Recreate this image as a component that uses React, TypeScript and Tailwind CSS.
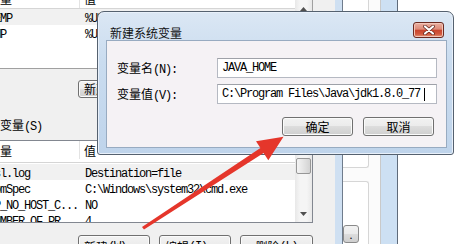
import React from "react";

const CJK_SPLIT = /([\u3400-\u9fff\u3000-\u303f\uff00-\uffef]+)/;
const CJK_TEST = /[\u3400-\u9fff\u3000-\u303f\uff00-\uffef]/;

function Mix({ s }: { s: string }) {
  const parts = s.split(CJK_SPLIT).filter((p) => p.length > 0);
  return (
    <>
      {parts.map((p, i) =>
        CJK_TEST.test(p) ? (
          <span key={i} className="font-['Noto_Sans_CJK_SC',sans-serif] text-[12px]">
            {p}
          </span>
        ) : (
          <span key={i} className="font-['Liberation_Mono',monospace] text-[12px] tracking-[-1.2px]">
            {p}
          </span>
        )
      )}
    </>
  );
}

function WinButton({ label, className }: { label: string; className: string }) {
  return (
    <div
      className={`flex items-center justify-center rounded-[3px] border border-[#707070] bg-[linear-gradient(#f2f2f2,#ebebeb_50%,#dddddd_50%,#cfcfcf)] shadow-[inset_0_0_0_1px_#fbfbfb] whitespace-pre leading-[14px] text-black ${className}`}
    >
      <Mix s={label} />
    </div>
  );
}

function Row({ name, value, shade }: { name: string; value: string; shade?: boolean }) {
  return (
    <div className={`flex h-[16px] items-center whitespace-pre leading-[16px] text-black ${shade ? "bg-[#f1f1f1]" : "bg-white"}`}>
      <div className="w-[80px] shrink-0">
        <span className="-ml-[12px] inline-block">
          <Mix s={name} />
        </span>
      </div>
      <div className="pl-[5px]">
        <Mix s={value} />
      </div>
    </div>
  );
}

function Header() {
  return (
    <div className="flex h-[20px] items-center border-b border-[#d5d5d5] bg-white leading-[16px] text-black">
      <div className="flex h-full w-[80px] shrink-0 items-center border-r border-[#e3e3e3]">
        <span className="-ml-[12px]">
          <Mix s="变量" />
        </span>
      </div>
      <div className="pl-[4px]">
        <Mix s="值" />
      </div>
    </div>
  );
}

function ScrollBar() {
  return (
    <div className="flex h-full w-[17px] shrink-0 flex-col bg-[linear-gradient(90deg,#e8e8e8,#f5f5f5_30%,#f5f5f5_70%,#e8e8e8)]">
      <div className="flex h-[17px] items-center justify-center">
        <svg width="7" height="4" viewBox="0 0 7 4">
          <path d="M0 4 L3.5 0 L7 4 Z" fill="#505050" />
        </svg>
      </div>
      <div className="mx-[1px] h-[16px] rounded-[2px] border border-[#979797] bg-[linear-gradient(90deg,#f4f4f4,#e4e4e4_50%,#d3d3d3)]" />
      <div className="flex-1" />
      <div className="flex h-[17px] items-center justify-center">
        <svg width="7" height="4" viewBox="0 0 7 4">
          <path d="M0 0 L3.5 4 L7 0 Z" fill="#505050" />
        </svg>
      </div>
    </div>
  );
}

function LeftPane() {
  return (
    <div className="flex h-full w-[313px] shrink-0 flex-col bg-[#f0f0f0]">
      {/* upper list (user variables) */}
      <div className="flex h-[69px] shrink-0 border-b border-r border-[#a0a0a0] bg-white">
        <div className="flex flex-1 flex-col overflow-hidden">
          <div className="-mt-[11px]">
            <Header />
          </div>
          <Row name="TEMP" value="%USERPROFILE%\AppData\Local\Temp" shade />
          <Row name="TMP" value="%USERPROFILE%\AppData\Local\Temp" />
        </div>
        <ScrollBar />
      </div>

      {/* middle gray area */}
      <div className="flex h-[71px] shrink-0 flex-col pt-[11px]">
        <WinButton label="新建(N)..." className="ml-[78px] h-[18px] w-[72px]" />
        <div className="mt-[20px] h-[12px] whitespace-pre leading-[12px] text-black">
          <span className="-ml-[24px] inline-block">
            <Mix s="系统变量(S)" />
          </span>
        </div>
      </div>

      {/* lower list (system variables) */}
      <div className="flex h-[83px] shrink-0 border-y border-r border-[#828790] bg-white">
        <div className="flex flex-1 flex-col overflow-hidden">
          <div className="h-[23px] shrink-0">
            <div className="flex h-[22px] items-center border-b border-[#d5d5d5] bg-white pb-[3px] leading-[16px] text-black">
              <div className="flex h-full w-[80px] shrink-0 items-center border-r border-[#e3e3e3]">
                <span className="-ml-[12px]">
                  <Mix s="变量" />
                </span>
              </div>
              <div className="pl-[4px]">
                <Mix s="值" />
              </div>
            </div>
          </div>
          <Row name="asl.log" value="Destination=file" shade />
          <Row name="ComSpec" value="C:\Windows\system32\cmd.exe" />
          <Row name="FP_NO_HOST_C..." value="NO" />
          <Row name="NUMBER_OF_PR..." value="4" />
        </div>
        <ScrollBar />
      </div>

      {/* bottom buttons */}
      <div className="flex shrink-0 gap-[9px] pl-[78px] pt-[12px]">
        <WinButton label="新建(W)..." className="h-[23px] w-[72px]" />
        <WinButton label="编辑(I)..." className="h-[23px] w-[72px]" />
        <WinButton label="删除(L)" className="h-[23px] w-[73px]" />
      </div>
    </div>
  );
}

function CloseButton() {
  return (
    <div className="mr-[3px] mt-[10px] flex h-[16px] w-[31px] items-center justify-center rounded-[3px] border border-[#6b2a21] bg-[linear-gradient(#eab0a2,#dd8a78_45%,#c8432c_50%,#d25a3f_80%,#e59a7e)] shadow-[inset_0_0_0_1px_#f2c5b8]">
      <svg width="12" height="10" viewBox="0 0 12 10">
        <path d="M2 1.5 L10 8.5 M10 1.5 L2 8.5" stroke="#5b2018" strokeWidth="3.6" strokeLinecap="round" />
        <path d="M2 1.5 L10 8.5 M10 1.5 L2 8.5" stroke="#ffffff" strokeWidth="2.2" strokeLinecap="round" />
      </svg>
    </div>
  );
}

function Dialog() {
  return (
    <div className="absolute left-[97px] top-[11px] flex h-[144px] w-[357px] flex-col rounded-t-[7px] rounded-b-[3px] border border-[#55616f] bg-[linear-gradient(180deg,#dbe7f4_0%,#cadcef_35%,#bfd4eb_100%)] pb-[6px] pl-[8px] pr-[6px] shadow-[inset_0_0_0_1px_#e8f0fa]">
      <div className="flex h-[28px] shrink-0 items-start justify-between">
        <div className="ml-[4px] mt-[12px] leading-[16px] text-[#111]">
          <Mix s="新建系统变量" />
        </div>
        <CloseButton />
      </div>
      <div className="flex flex-1 flex-col border border-[#98abc1] bg-[#f5f2f5] pt-[17px]">
        <div className="flex h-[20px] items-center">
          <div className="w-[110px] shrink-0 whitespace-pre pl-[10px] leading-[16px] text-black">
            <Mix s="变量名(N):" />
          </div>
          <div className="flex h-[20px] w-[220px] items-center whitespace-pre border border-[#b5b9c2] border-t-[#9ea1a8] bg-white pl-[4px] leading-[16px] text-black">
            <Mix s="JAVA_HOME" />
          </div>
        </div>
        <div className="mt-[6px] flex h-[20px] items-center">
          <div className="w-[110px] shrink-0 whitespace-pre pl-[10px] leading-[16px] text-black">
            <Mix s="变量值(V):" />
          </div>
          <div className="flex h-[20px] w-[220px] items-center whitespace-pre border border-[#b5b9c2] border-t-[#9ea1a8] bg-white pl-[4px] leading-[16px] text-black">
            <Mix s={"C:\\Program Files\\Java\\jdk1.8.0_77"} />
            <span className="ml-[4px] h-[13px] w-[1px] bg-black" />
          </div>
        </div>
        <div className="mt-[13px] flex justify-end gap-[10px] pr-[12px]">
          <WinButton label="确定" className="h-[19px] w-[71px]" />
          <WinButton label="取消" className="h-[19px] w-[71px]" />
        </div>
      </div>
    </div>
  );
}

function Arrow() {
  return (
    <svg className="pointer-events-none absolute left-0 top-0" width="471" height="244" viewBox="0 0 471 244">
      <polygon
        points="142,227 260.4,148.1 256,141.2 283.5,136.8 268.3,160.3 263.6,153.1 144,229.5"
        fill="#e5362b"
      />
    </svg>
  );
}

export default function App() {
  return (
    <div className="relative flex h-[244px] w-[471px] overflow-hidden bg-white">
      <LeftPane />
      <div className="h-full w-[22px] shrink-0 bg-[#f0f0f0]" />
      <div className="h-full w-[8px] shrink-0 border-r border-[#6f7c8c] bg-[#cfe0f2]" />
      <div className="flex h-full w-[37px] shrink-0 flex-col bg-[#fbfbfb]">
        <div className="mr-[11px] h-[168px] shrink-0 rounded-br-[3px] border-b border-r border-[#d6d6d6] bg-white" />
        <div className="mr-[11px] mt-[13px] flex flex-1 flex-col justify-end rounded-tr-[3px] border-r border-t border-[#d6d6d6] bg-white pb-[1px]">
          <div className="flex h-[18px] w-[16px] items-center justify-center rounded-[3px] border border-[#8a8a8a] bg-[linear-gradient(#f2f2f2,#ebebeb_50%,#dddddd_50%,#cfcfcf)] text-[11px] leading-none">
            .
          </div>
        </div>
      </div>
      <div className="h-full w-[18px] shrink-0 border-l border-r border-l-[#c9c9c9] border-r-[#5f6b7a] bg-[#cde0f3]" />
      <div className="h-full flex-1 bg-white" />
      <Dialog />
      <Arrow />
    </div>
  );
}
